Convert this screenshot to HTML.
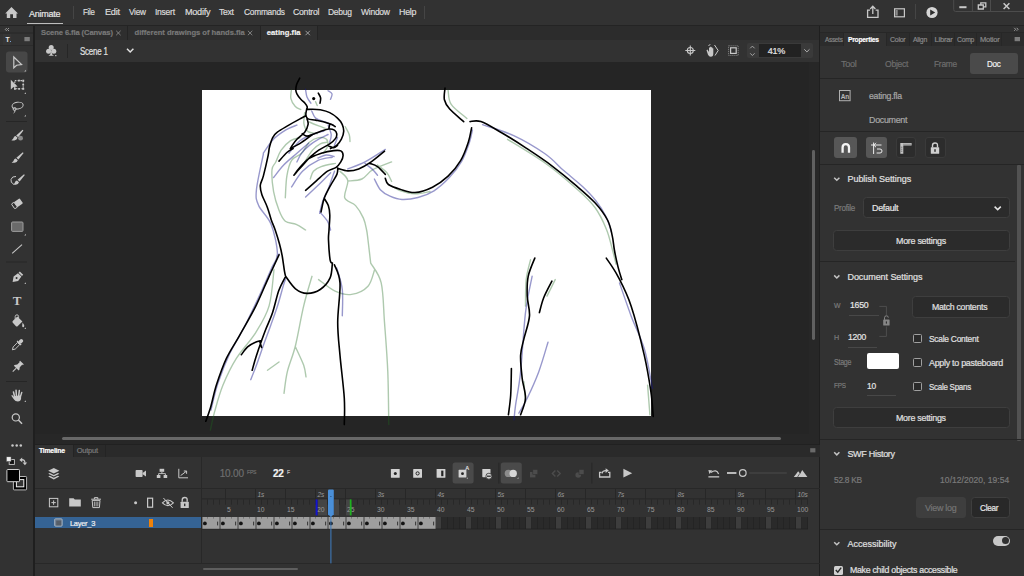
<!DOCTYPE html>
<html>
<head>
<meta charset="utf-8">
<title>Animate</title>
<style>
*{box-sizing:border-box;margin:0;padding:0}
html,body{width:1024px;height:576px;overflow:hidden;background:#252525;font-family:"Liberation Sans",sans-serif;font-size:10px;color:#d8d8d8}
.a{position:absolute}
.t{position:absolute;white-space:nowrap;line-height:12px;height:12px;-webkit-text-stroke:0.2px currentColor}
svg{position:absolute;overflow:visible}
</style>
</head>
<body>
<div class="a" style="left:0px;top:0px;width:1024px;height:25px;background:#323232;"></div>
<div class="a" style="left:0px;top:25px;width:1024px;height:1px;background:#242424;"></div>
<div class="a" style="left:0px;top:26px;width:33px;height:550px;background:#323232;"></div>
<div class="a" style="left:33px;top:26px;width:2px;height:550px;background:#1f1f1f;"></div>
<div class="a" style="left:35px;top:26px;width:785px;height:14px;background:#2c2c2c;"></div>
<div class="a" style="left:35px;top:40px;width:785px;height:22px;background:#323232;"></div>
<div class="a" style="left:35px;top:62px;width:785px;height:382px;background:#252525;"></div>
<div class="a" style="left:201.7px;top:89.7px;width:449.4px;height:326.6px;background:#ffffff;"></div>
<div class="a" style="left:35px;top:443.6px;width:785px;height:2px;background:#212121;"></div>
<div class="a" style="left:35px;top:445px;width:785px;height:131px;background:#323232;"></div>
<div class="a" style="left:818.8px;top:26px;width:1.4px;height:550px;background:#1f1f1f;"></div>
<div class="a" style="left:820.2px;top:26px;width:203.8px;height:550px;background:#323232;"></div>
<div class="a" style="left:27px;top:23px;width:36px;height:1px;background:#bdbdbd;"></div>
<div class="a" style="left:73px;top:6px;width:1px;height:13px;background:#454545;"></div>
<div class="a" style="left:424px;top:6px;width:1px;height:13px;background:#454545;"></div>
<div class="a" style="left:35px;top:26px;width:92px;height:14px;background:#2e2e2e;"></div>
<div class="a" style="left:127px;top:26px;width:1px;height:14px;background:#242424;"></div>
<div class="a" style="left:128px;top:26px;width:132px;height:14px;background:#2e2e2e;"></div>
<div class="a" style="left:259.5px;top:26px;width:1px;height:14px;background:#242424;"></div>
<div class="a" style="left:260.5px;top:26px;width:56.5px;height:14px;background:#313131;"></div>
<div class="a" style="left:317px;top:26px;width:1px;height:14px;background:#242424;"></div>
<div class="a" style="left:67px;top:44px;width:1px;height:14px;background:#262626;"></div>
<div class="a" style="left:747px;top:43px;width:66px;height:15px;background:#3a3a3a;border-radius:2px"></div>
<div class="a" style="left:759px;top:44px;width:42px;height:13px;background:#222222;"></div>
<div class="a" style="left:809px;top:62px;width:10px;height:382px;background:#272727;"></div>
<div class="a" style="left:35px;top:433.5px;width:784px;height:10px;background:#272727;"></div>
<div class="a" style="left:62px;top:437px;width:719.3px;height:3px;background:#686868;border-radius:1.5px"></div>
<div class="a" style="left:812.2px;top:149.5px;width:2.8px;height:190px;background:#606060;border-radius:1.4px"></div>
<div class="a" style="left:820.2px;top:26px;width:203.8px;height:7px;background:#2f2f2f;"></div>
<div class="a" style="left:820.2px;top:32.4px;width:203.8px;height:1px;background:#272727;"></div>
<div class="a" style="left:820.2px;top:33.4px;width:203.8px;height:12.4px;background:#2c2c2c;"></div>
<div class="a" style="left:844px;top:33px;width:41.6px;height:13px;background:#323232;"></div>
<div class="a" style="left:843.4px;top:33px;width:1px;height:13px;background:#272727;"></div>
<div class="a" style="left:885.6px;top:33px;width:1px;height:13px;background:#272727;"></div>
<div class="a" style="left:909px;top:33px;width:1px;height:13px;background:#272727;"></div>
<div class="a" style="left:931px;top:33px;width:1px;height:13px;background:#272727;"></div>
<div class="a" style="left:953.6px;top:33px;width:1px;height:13px;background:#272727;"></div>
<div class="a" style="left:976px;top:33px;width:1px;height:13px;background:#272727;"></div>
<div class="a" style="left:1000.6px;top:33px;width:1px;height:13px;background:#272727;"></div>
<div class="a" style="left:970px;top:53px;width:48px;height:21px;background:#4a4a4a;border-radius:3px"></div>
<div class="a" style="left:820.2px;top:78px;width:203.8px;height:1.2px;background:#252525;"></div>
<div class="a" style="left:820.2px;top:131px;width:203.8px;height:1.2px;background:#252525;"></div>
<div class="a" style="left:834px;top:137px;width:23px;height:21px;background:#575757;border-radius:3px"></div>
<div class="a" style="left:866px;top:137px;width:21px;height:21px;background:#575757;border-radius:3px"></div>
<div class="a" style="left:896px;top:137px;width:20px;height:21px;background:#2c2c2c;border-radius:3px;border:1px solid #3a3a3a"></div>
<div class="a" style="left:925px;top:137px;width:21px;height:21px;background:#2c2c2c;border-radius:3px;border:1px solid #3a3a3a"></div>
<div class="a" style="left:820.2px;top:164px;width:203.8px;height:1.2px;background:#252525;"></div>
<div class="a" style="left:1017.2px;top:165px;width:3.6px;height:276px;background:#525252;border-radius:1px"></div>
<div class="a" style="left:863px;top:197.4px;width:146.6px;height:21px;background:#2b2b2b;border-radius:3.5px;border:1px solid #3e3e3e"></div>
<div class="a" style="left:833.4px;top:229.6px;width:176.2px;height:21px;background:#2b2b2b;border-radius:3.5px;border:1px solid #3e3e3e"></div>
<div class="a" style="left:820.2px;top:261px;width:194.8px;height:1.2px;background:#252525;"></div>
<div class="a" style="left:849px;top:315px;width:30px;height:1px;background:#484848;"></div>
<div class="a" style="left:848px;top:347px;width:29px;height:1px;background:#484848;"></div>
<div class="a" style="left:912px;top:296.2px;width:97.6px;height:21.5px;background:#2b2b2b;border-radius:3.5px;border:1px solid #3e3e3e"></div>
<div class="a" style="left:913px;top:334px;width:9px;height:9px;background:#2a2a2a;border:1px solid #a0a0a0;border-radius:1.5px"></div>
<div class="a" style="left:913px;top:358px;width:9px;height:9px;background:#2a2a2a;border:1px solid #a0a0a0;border-radius:1.5px"></div>
<div class="a" style="left:913px;top:382px;width:9px;height:9px;background:#2a2a2a;border:1px solid #a0a0a0;border-radius:1.5px"></div>
<div class="a" style="left:867px;top:353px;width:32px;height:16px;background:#ffffff;border-radius:2px"></div>
<div class="a" style="left:867px;top:395px;width:29px;height:1px;background:#484848;"></div>
<div class="a" style="left:833.4px;top:407px;width:176.2px;height:21px;background:#2b2b2b;border-radius:3.5px;border:1px solid #3e3e3e"></div>
<div class="a" style="left:820.2px;top:438.7px;width:203.8px;height:1.3px;background:#252525;"></div>
<div class="a" style="left:915.8px;top:496.6px;width:50.4px;height:21.2px;background:#3e3e3e;border-radius:3.5px"></div>
<div class="a" style="left:971.3px;top:496.6px;width:38.3px;height:21.2px;background:#282828;border-radius:3.5px;border:1px solid #3e3e3e"></div>
<div class="a" style="left:820.2px;top:528.5px;width:203.8px;height:1.3px;background:#252525;"></div>
<div class="a" style="left:993px;top:536px;width:17px;height:9.5px;background:#c8c8c8;border-radius:5px"></div>
<div class="a" style="left:1001.5px;top:537.3px;width:7px;height:7px;background:#303030;border-radius:4px"></div>
<div class="a" style="left:834px;top:565.5px;width:9px;height:9px;background:#d0d0d0;border-radius:1.5px"></div>
<div class="a" style="left:35px;top:445px;width:785px;height:12px;background:#2a2a2a;"></div>
<div class="a" style="left:35px;top:445px;width:38px;height:12px;background:#323232;"></div>
<div class="a" style="left:73px;top:445px;width:1px;height:12px;background:#242424;"></div>
<div class="a" style="left:105px;top:445px;width:1px;height:12px;background:#242424;"></div>
<div class="a" style="left:35px;top:488px;width:785px;height:1px;background:#282828;"></div>
<div class="a" style="left:201px;top:457px;width:1px;height:107px;background:#282828;"></div>
<div class="a" style="left:35px;top:563px;width:785px;height:1px;background:#282828;"></div>
<div class="a" style="left:203px;top:567.8px;width:95px;height:2.6px;background:#5e5e5e;border-radius:1.3px"></div>
<div class="a" style="left:35px;top:516.8px;width:166.4px;height:11.6px;background:#356394;"></div>
<div class="a" style="left:149px;top:519px;width:3.5px;height:8px;background:#f0820a;"></div>
<svg width="1024" height="576" viewBox="0 0 1024 576" style="left:0;top:0"><g fill="none" stroke-linecap="round" stroke-linejoin="round"><path d="M392.0,186.0C393.3,186.8 396.2,189.2 400.0,190.5C403.8,191.8 410.0,193.6 415.0,193.8C420.0,194.0 427.5,191.9 430.0,191.5M304.7,162.0C306.0,160.0 309.9,153.1 312.5,150.1C315.1,147.1 317.9,145.2 320.3,143.9C322.7,142.6 325.6,142.6 326.6,142.3M326.6,139.2C326.9,140.2 328.6,143.1 328.1,145.4C327.6,147.7 324.2,151.9 323.4,153.2M291.4,90.0C291.3,91.4 290.2,95.9 290.9,98.6C291.5,101.3 293.6,104.6 295.3,106.4C297.0,108.2 299.9,109.0 300.8,109.5M304.7,112.6C304.6,114.4 303.4,120.5 303.9,123.6C304.4,126.7 305.6,129.7 307.8,131.4C310.0,133.1 315.6,133.3 317.2,133.7M315.6,101.7L317.2,105.6M345.3,126.7C345.9,128.0 348.4,132.0 349.2,134.5C350.0,137.0 349.9,140.3 350.0,141.5M309.4,122.0C310.9,122.7 316.1,124.9 318.7,125.9C321.3,126.9 323.9,127.8 325.0,128.2M300.0,137.6C298.4,138.1 293.7,138.6 290.6,140.7C287.5,142.8 283.7,146.5 281.2,150.1C278.7,153.7 277.3,158.7 275.8,162.0C274.3,165.3 272.4,164.8 272.0,169.7C271.6,174.6 272.4,184.8 273.6,191.6C274.8,198.4 277.1,205.4 279.0,210.3C280.9,215.2 282.4,218.8 285.3,221.2C288.2,223.5 292.8,222.9 296.2,224.4C299.6,225.9 304.0,229.1 305.6,230.0M328.1,145.4C327.9,144.4 328.2,140.5 326.6,139.2C325.0,137.9 321.6,137.1 318.7,137.6C315.8,138.1 312.2,139.7 309.4,142.3C306.5,144.9 304.6,150.2 301.6,153.2C298.6,156.2 294.1,156.5 291.6,160.3C289.2,164.1 287.9,169.7 286.9,175.9C285.8,182.2 285.6,194.2 285.3,197.8M335.3,163.4C332.9,163.9 324.9,165.3 321.2,166.6C317.5,167.9 315.2,169.1 313.4,171.2C311.6,173.3 310.8,177.7 310.3,179.0M340.0,171.2C341.3,172.8 347.0,176.2 347.8,180.6C348.6,185.0 343.4,193.6 344.7,197.8C346.0,202.0 352.5,202.2 355.6,205.6C358.7,209.0 361.6,214.0 363.4,218.1C365.2,222.2 365.8,226.3 366.6,230.0C367.4,233.7 367.3,234.5 368.0,240.0C368.7,245.5 370.2,259.2 370.7,263.1M347.8,181.0C350.1,180.7 357.7,180.9 361.9,179.0C366.1,177.1 367.9,172.5 372.8,169.7C377.8,166.8 388.5,163.2 391.6,161.9M377.5,165.0C379.1,166.3 384.5,170.1 386.9,172.8C389.2,175.5 390.8,180.0 391.6,181.4M448.1,90.3C448.6,92.7 448.1,99.7 451.2,104.4C454.3,109.1 464.3,116.1 466.9,118.4M507.5,139.3C513.8,143.2 533.2,154.6 545.0,163.0C556.8,171.4 569.7,182.6 578.0,190.0C586.3,197.4 590.2,200.9 595.0,207.5C599.8,214.1 603.6,222.3 606.5,229.4C609.4,236.5 610.9,244.2 612.5,250.0C614.1,255.8 615.4,261.7 616.0,264.0M370.7,263.1C372.4,266.4 378.9,273.0 381.2,282.9C383.5,292.8 383.4,307.6 384.5,322.4C385.6,337.2 387.1,354.9 387.8,371.9C388.5,388.9 388.6,415.8 388.8,424.6M318.6,279.6C321.4,281.5 329.6,288.6 335.1,291.1C340.6,293.6 346.1,295.2 351.6,294.4C357.1,293.6 364.2,290.3 368.0,286.2C371.8,282.1 373.5,272.4 374.6,269.7M312.0,276.3C310.6,281.2 306.4,294.4 303.7,305.9C300.9,317.4 298.2,334.5 295.5,345.5C292.8,356.5 289.2,363.9 287.3,371.9C285.4,379.9 284.6,389.7 284.0,393.3M295.5,347.1C296.9,350.1 301.9,360.4 303.7,365.3C305.4,370.2 305.6,374.9 306.0,376.8M267.5,370.2L279.0,362.0M274.0,269.7C273.2,275.7 272.1,295.5 269.1,305.9C266.1,316.3 261.4,323.5 255.9,332.3C250.4,341.1 241.7,349.9 236.2,358.7C230.7,367.5 226.6,376.3 223.0,385.1C219.4,393.9 216.8,403.9 214.7,411.4C212.6,418.9 211.1,426.9 210.4,430.0M530.5,259.8C529.8,263.1 527.0,271.9 526.2,279.6C525.4,287.3 525.6,301.6 525.5,306.0M555.2,279.6L547.0,296.1M523.9,381.8L525.5,401.6M647.6,385.1L649.9,414.8" stroke="rgba(30,105,30,0.36)" stroke-width="1.4"/><path d="M328.1,134.5C326.5,135.3 321.8,137.4 318.7,139.2C315.6,141.0 312.2,143.1 309.4,145.4C306.5,147.7 303.7,150.4 301.6,153.2C299.5,156.0 297.7,160.5 296.9,162.0M337.5,137.6L334.4,145.4M318.0,158.0C319.3,157.5 323.3,155.2 326.0,155.0C328.7,154.8 332.7,156.2 334.0,156.5M279.0,254.0C277.2,258.0 271.8,269.8 268.0,278.0C264.2,286.2 258.0,298.8 256.0,303.0M305.5,89.2C305.8,90.5 306.1,94.7 307.0,97.0C307.9,99.3 310.2,102.2 310.9,103.2M328.1,90.7C328.8,91.2 331.6,92.5 332.0,93.9C332.4,95.3 330.8,98.4 330.5,99.3M311.7,111.0C312.4,112.2 313.4,116.3 315.6,118.1C317.8,119.9 322.1,120.8 325.0,122.0C327.9,123.2 331.7,124.5 333.0,125.0M263.3,153.2C265.0,150.9 269.6,143.1 273.4,139.2C277.2,135.3 282.0,132.2 285.9,129.8C289.8,127.5 295.1,125.9 296.9,125.1M289.0,153.2C290.8,151.1 296.1,143.8 300.0,140.7C303.9,137.6 308.5,136.1 312.5,134.5C316.5,132.9 322.1,131.6 324.0,131.0M328.1,125.1C328.6,126.7 330.9,131.6 331.2,134.5C331.5,137.4 329.9,141.0 329.7,142.3M263.4,154.0C262.2,160.0 257.2,181.4 256.4,190.0C255.6,198.6 256.2,199.9 258.7,205.6C261.2,211.3 268.1,216.5 271.2,224.4C274.3,232.3 277.2,246.2 277.4,253.2C277.6,260.2 273.2,264.2 272.4,266.4M273.6,177.5C275.3,175.4 279.7,169.2 283.7,165.0C287.7,160.8 293.6,156.2 297.8,152.5C302.0,148.8 306.9,144.7 308.7,143.1M291.6,186.9C293.4,184.3 298.1,175.6 302.5,171.2C306.9,166.8 313.2,162.6 318.1,160.3C323.1,158.0 329.9,157.7 332.2,157.2M305.6,197.0C307.7,195.1 313.9,189.3 318.1,185.3C322.3,181.3 328.5,174.9 330.6,172.8M319.7,213.4C320.2,211.3 321.2,205.4 322.8,201.0C324.4,196.6 327.1,191.9 329.0,186.9C330.9,181.9 333.6,173.8 334.5,171.2M319.7,211.9C321.0,213.4 325.7,218.2 327.5,221.2C329.3,224.2 330.1,228.5 330.6,230.0M347.8,168.9C350.7,167.7 358.8,165.2 365.0,161.9C371.2,158.7 381.9,151.5 385.3,149.4M374.4,179.0C375.4,180.8 378.0,187.1 380.6,190.0C383.2,192.9 386.4,194.6 390.0,196.2C393.6,197.8 397.3,199.3 402.0,199.5C406.7,199.7 412.7,198.9 418.0,197.5C423.3,196.1 428.8,194.1 434.0,190.8C439.2,187.5 444.7,182.5 449.3,177.6C453.9,172.7 458.2,167.3 461.6,161.4C465.0,155.5 467.6,147.6 469.4,142.4C471.2,137.2 471.9,132.1 472.4,130.0M365.0,163.4C366.3,164.4 370.7,167.7 372.8,169.7C374.9,171.7 376.7,174.3 377.5,175.2M482.5,124.7C487.7,126.5 503.3,130.8 513.7,135.6C524.1,140.4 536.7,148.0 545.0,153.8C553.3,159.6 557.5,165.1 563.7,170.6C570.0,176.1 577.1,181.5 582.5,186.6C587.9,191.7 592.1,196.0 596.0,201.0C599.9,206.0 603.4,211.3 606.0,216.5C608.6,221.7 610.6,229.4 611.5,232.0M272.4,266.4C270.7,270.3 266.4,280.4 262.0,290.0C257.6,299.6 251.3,313.2 246.0,323.7C240.7,334.2 234.7,343.1 230.0,353.0C225.3,362.9 221.2,373.6 218.0,383.1C214.8,392.6 212.2,405.5 211.0,410.0M286.0,278.0C285.6,279.2 284.9,280.3 283.5,285.0C282.1,289.7 279.7,299.2 277.5,306.0C275.3,312.8 272.8,319.5 270.5,326.0C268.2,332.5 265.8,338.5 263.5,345.0C261.2,351.5 258.6,359.2 256.5,365.0C254.4,370.8 251.7,377.2 250.7,379.7M336.7,268.0C337.6,271.6 341.4,281.5 342.3,289.5C343.2,297.5 342.3,311.4 342.3,315.8M532.1,276.3C531.0,282.4 527.4,296.7 525.5,312.6C523.6,328.5 522.2,356.5 520.6,371.9C519.0,387.3 516.7,396.9 515.6,404.9C514.5,412.9 514.3,417.2 514.0,419.7M548.0,342.2C546.5,347.1 542.2,362.5 538.7,371.9C535.2,381.2 530.5,391.4 527.2,398.3C523.9,405.2 520.3,410.7 518.9,413.2M619.5,282.9C621.4,288.4 627.0,304.9 631.1,315.9C635.2,326.9 640.7,336.7 644.3,348.8C647.9,360.9 651.1,381.8 652.5,388.4" stroke="rgba(20,20,140,0.44)" stroke-width="1.4"/><path d="M299.7,78.2C299.2,79.2 297.2,82.5 296.6,84.5C296.0,86.5 295.8,88.4 295.8,90.0C295.9,91.6 296.1,92.4 296.9,93.9C297.7,95.5 299.4,97.8 300.8,99.3C302.2,100.8 303.9,102.0 305.0,103.2C306.1,104.4 306.9,105.7 307.2,106.7C307.5,107.7 306.7,108.8 306.6,109.2M318.3,93.1C318.7,93.9 320.3,96.1 320.6,97.8C320.9,99.5 320.1,102.3 320.0,103.2M306.6,109.5C307.6,109.5 310.2,109.2 312.5,109.2C314.8,109.2 317.4,109.2 320.3,109.8C323.2,110.4 326.8,111.2 329.7,112.6C332.6,114.0 335.4,116.1 337.5,118.1C339.6,120.0 341.2,122.1 342.2,124.3C343.2,126.5 343.8,128.9 343.7,131.4C343.6,133.9 342.6,136.9 341.4,139.2C340.2,141.5 338.5,143.8 336.7,145.4C334.9,147.0 331.5,148.1 330.5,148.6M306.6,109.5C306.5,110.4 305.6,113.4 305.9,115.0C306.1,116.6 306.5,118.1 308.1,118.9C309.7,119.8 313.1,119.6 315.6,120.1C318.2,120.6 320.8,121.0 323.4,121.7C326.0,122.4 329.2,123.5 331.2,124.3C333.2,125.1 334.5,126.3 335.2,126.7M305.9,115.7C304.9,116.2 303.1,117.2 300.0,118.9C296.9,120.6 291.3,123.7 287.5,125.9C283.7,128.1 279.8,130.2 277.3,132.2C274.8,134.1 274.0,135.1 272.7,137.6C271.4,140.1 270.3,144.0 269.5,147.0C268.7,150.0 269.1,150.8 268.1,155.6C267.1,160.4 264.7,170.9 263.4,175.9C262.1,180.9 260.6,182.2 260.3,185.3C260.1,188.4 260.7,191.0 261.9,194.7C263.1,198.3 265.8,203.0 267.3,207.2C268.9,211.4 269.9,215.9 271.2,219.7C272.5,223.5 273.8,225.9 275.2,230.0C276.6,234.1 278.3,239.6 279.5,244.0C280.7,248.4 281.5,251.9 282.3,256.5C283.1,261.1 283.9,268.0 284.5,271.3C285.1,274.6 285.4,275.5 285.6,276.3M307.0,118.9C307.2,119.8 308.5,122.1 308.1,124.3C307.7,126.5 306.6,129.7 304.7,132.2C302.8,134.7 299.0,137.0 296.9,139.2C294.8,141.4 293.3,143.8 292.2,145.4C291.1,147.0 290.6,148.3 290.3,148.9M290.3,148.6C292.2,147.6 297.9,144.7 301.6,142.3C305.3,140.0 310.7,135.8 312.5,134.5M293.1,148.6C292.1,149.2 289.2,150.4 286.9,152.5C284.5,154.6 280.3,159.7 279.0,161.1M302.3,133.7C303.1,134.1 305.3,136.0 307.0,136.1C308.7,136.2 310.3,135.3 312.5,134.5C314.7,133.7 317.6,132.3 320.3,131.4C323.0,130.5 326.5,129.2 328.9,129.0C331.2,128.8 333.1,129.3 334.4,130.1C335.7,130.9 336.5,132.3 336.7,133.7C336.9,135.1 336.8,136.7 335.6,138.4C334.4,140.1 332.5,142.0 329.7,143.9C326.9,145.8 321.8,148.0 318.7,150.1C315.6,152.2 313.1,154.4 310.9,156.4C308.7,158.4 307.7,159.8 305.6,162.0C303.6,164.2 300.6,167.5 298.6,169.7C296.7,171.9 294.7,174.3 293.9,175.2M329.7,124.3L328.9,128.6M293.9,175.2C294.8,174.0 296.9,170.8 299.4,168.1C301.9,165.3 305.1,161.2 308.7,158.7C312.3,156.2 317.0,154.7 321.2,153.3C325.4,152.0 330.4,151.0 333.7,150.6C337.0,150.2 339.2,150.1 340.8,150.9C342.4,151.7 343.1,153.8 343.1,155.6C343.1,157.4 342.0,159.9 340.8,161.9C339.6,163.9 338.3,165.8 336.1,167.3C333.9,168.9 330.8,169.0 327.5,171.2C324.2,173.4 320.2,177.4 316.6,180.6C313.0,183.8 307.4,188.7 305.6,190.3M329.0,146.2C329.8,146.5 332.3,147.9 333.7,147.8C335.1,147.7 336.9,145.8 337.5,145.4M337.7,168.1C337.6,169.2 338.1,171.5 336.9,174.4C335.7,177.3 332.7,181.4 330.6,185.3C328.5,189.2 325.8,194.2 324.4,197.8C323.0,201.5 322.6,204.8 322.0,207.2C321.4,209.6 321.2,211.2 321.0,212.0M324.4,198.6C325.0,199.8 327.4,202.9 328.3,205.6C329.2,208.3 329.7,210.9 329.8,215.0C329.9,219.1 329.2,225.8 329.0,230.0C328.8,234.2 328.3,235.0 328.5,240.0C328.7,245.0 329.5,256.0 330.1,259.8C330.8,263.7 332.0,262.6 332.4,263.1M337.7,168.4C339.4,168.8 344.3,170.8 347.8,170.9C351.3,171.0 354.8,170.4 358.7,168.9C362.6,167.4 366.9,164.9 371.2,161.9C375.5,158.9 382.3,153.0 384.5,151.2M369.7,163.4C371.0,163.9 374.9,164.8 377.5,166.6C380.1,168.4 384.0,173.1 385.3,174.4M385.3,178.3C385.8,179.3 385.9,182.7 388.4,184.5C390.8,186.3 395.6,187.9 400.0,189.2C404.4,190.5 409.6,192.8 415.0,192.5C420.4,192.2 427.0,189.9 432.5,187.2C438.0,184.5 443.4,180.6 448.1,176.2C452.8,171.8 457.2,166.3 460.6,160.6C464.0,154.9 466.6,147.4 468.4,141.9C470.2,136.4 471.1,130.2 471.6,127.8M445.0,88.1C444.9,90.0 443.6,96.2 444.4,99.7C445.2,103.2 446.5,105.4 449.7,109.1C452.9,112.8 461.4,119.5 463.7,121.6M470.0,121.6C471.8,121.6 475.7,119.8 480.9,121.6C486.1,123.4 493.6,128.1 501.2,132.5C508.8,136.9 517.9,142.6 526.2,148.1C534.5,153.6 542.9,159.1 551.2,165.3C559.5,171.6 568.9,179.3 576.2,185.6C583.5,191.8 589.8,197.1 595.0,202.8C600.2,208.5 604.6,214.5 607.5,220.0C610.4,225.5 611.1,230.6 612.2,235.6C613.4,240.6 613.5,244.9 614.4,250.0C615.3,255.1 616.7,261.5 617.9,266.4C619.1,271.3 621.1,277.4 621.8,279.6M606.3,258.1C608.2,261.1 613.8,268.3 617.9,276.3C622.0,284.3 626.7,292.8 631.1,306.0C635.5,319.2 641.0,341.1 644.3,355.4C647.6,369.7 649.4,381.5 650.9,391.7C652.4,401.9 652.8,412.3 653.2,416.4M285.6,276.3C287.2,278.4 291.9,286.0 295.5,288.8C299.1,291.6 302.9,293.3 307.0,293.4C311.1,293.5 316.3,292.1 320.2,289.5C324.1,286.9 328.1,282.3 330.1,277.9C332.1,273.5 332.0,265.6 332.4,263.1M279.0,254.8C277.4,258.4 273.0,267.8 269.1,276.3C265.2,284.8 260.8,296.0 255.9,305.9C251.0,315.8 244.4,326.8 239.5,335.6C234.6,344.4 230.2,350.4 226.3,358.7C222.5,366.9 219.1,376.9 216.4,385.1C213.8,393.3 212.2,402.1 210.4,408.1C208.6,414.1 206.6,419.1 205.8,421.3M285.0,277.5C284.0,279.7 280.9,284.8 278.8,290.6C276.7,296.4 274.8,305.9 272.6,312.5C270.4,319.1 267.3,325.3 265.5,330.0C263.7,334.7 263.2,336.1 261.6,340.6C260.0,345.1 257.6,352.1 256.0,357.0C254.4,361.9 252.8,368.1 252.2,370.3M241.3,354.7C242.4,353.4 245.2,349.0 247.6,346.9C249.9,344.8 253.1,343.2 255.4,342.2C257.7,341.1 260.6,340.9 261.6,340.6M260.0,342.2L261.6,347.5M334.4,264.7C335.3,267.7 339.4,273.3 340.0,282.9C340.6,292.5 337.7,310.3 337.7,322.4C337.7,334.5 338.9,342.8 340.0,355.4C341.1,368.0 343.6,386.7 344.3,398.2C345.0,409.7 344.3,420.2 344.3,424.6M534.8,258.1C533.7,261.1 529.5,270.0 528.2,276.3C526.9,282.6 527.0,289.5 527.2,296.1C527.4,302.7 530.0,308.8 529.5,315.9C529.0,323.0 525.4,332.3 523.9,338.9C522.4,345.5 520.9,348.8 520.6,355.4C520.3,362.0 521.4,371.4 522.2,378.5C523.0,385.6 525.8,392.2 525.5,398.3C525.2,404.4 521.4,412.1 520.6,414.8M551.9,281.2C550.5,283.9 545.8,292.5 543.7,297.7C541.6,302.9 540.1,310.1 539.4,312.6M511.4,368.6C511.3,373.0 511.2,387.3 510.7,395.0C510.2,402.7 508.8,411.5 508.4,414.8" stroke="#000" stroke-width="1.6"/><circle cx="313.7" cy="98.6" r="1.6" fill="#000" stroke="none"/></g></svg>
<svg width="1024" height="576" viewBox="0 0 1024 576" style="left:0;top:0"><rect x="202" y="489" width="606" height="28" fill="#323232"/><rect x="202" y="498.4" width="606" height="0.9" fill="#262626"/><path d="M225.5,489V499M255.5,489V499M285.5,489V499M315.5,489V499M345.5,489V499M375.5,489V499M405.5,489V499M435.5,489V499M465.5,489V499M495.5,489V499M525.5,489V499M555.5,489V499M585.5,489V499M615.5,489V499M645.5,489V499M675.5,489V499M705.5,489V499M735.5,489V499M765.5,489V499M795.5,489V499" stroke="#272727" stroke-width="1"/><path d="M207.5,499.4V504.6M213.5,499.4V504.6M219.5,499.4V504.6M225.5,499.4V504.6M231.5,499.4V504.6M237.5,499.4V504.6M243.5,499.4V504.6M249.5,499.4V504.6M255.5,499.4V504.6M261.5,499.4V504.6M267.5,499.4V504.6M273.5,499.4V504.6M279.5,499.4V504.6M285.5,499.4V504.6M291.5,499.4V504.6M297.5,499.4V504.6M303.5,499.4V504.6M309.5,499.4V504.6M315.5,499.4V504.6M321.5,499.4V504.6M327.5,499.4V504.6M333.5,499.4V504.6M339.5,499.4V504.6M345.5,499.4V504.6M351.5,499.4V504.6M357.5,499.4V504.6M363.5,499.4V504.6M369.5,499.4V504.6M375.5,499.4V504.6M381.5,499.4V504.6M387.5,499.4V504.6M393.5,499.4V504.6M399.5,499.4V504.6M405.5,499.4V504.6M411.5,499.4V504.6M417.5,499.4V504.6M423.5,499.4V504.6M429.5,499.4V504.6M435.5,499.4V504.6M441.5,499.4V504.6M447.5,499.4V504.6M453.5,499.4V504.6M459.5,499.4V504.6M465.5,499.4V504.6M471.5,499.4V504.6M477.5,499.4V504.6M483.5,499.4V504.6M489.5,499.4V504.6M495.5,499.4V504.6M501.5,499.4V504.6M507.5,499.4V504.6M513.5,499.4V504.6M519.5,499.4V504.6M525.5,499.4V504.6M531.5,499.4V504.6M537.5,499.4V504.6M543.5,499.4V504.6M549.5,499.4V504.6M555.5,499.4V504.6M561.5,499.4V504.6M567.5,499.4V504.6M573.5,499.4V504.6M579.5,499.4V504.6M585.5,499.4V504.6M591.5,499.4V504.6M597.5,499.4V504.6M603.5,499.4V504.6M609.5,499.4V504.6M615.5,499.4V504.6M621.5,499.4V504.6M627.5,499.4V504.6M633.5,499.4V504.6M639.5,499.4V504.6M645.5,499.4V504.6M651.5,499.4V504.6M657.5,499.4V504.6M663.5,499.4V504.6M669.5,499.4V504.6M675.5,499.4V504.6M681.5,499.4V504.6M687.5,499.4V504.6M693.5,499.4V504.6M699.5,499.4V504.6M705.5,499.4V504.6M711.5,499.4V504.6M717.5,499.4V504.6M723.5,499.4V504.6M729.5,499.4V504.6M735.5,499.4V504.6M741.5,499.4V504.6M747.5,499.4V504.6M753.5,499.4V504.6M759.5,499.4V504.6M765.5,499.4V504.6M771.5,499.4V504.6M777.5,499.4V504.6M783.5,499.4V504.6M789.5,499.4V504.6M795.5,499.4V504.6M801.5,499.4V504.6M807.5,499.4V504.6" stroke="#282828" stroke-width="1"/><rect x="318" y="499.4" width="9" height="16" fill="#454545"/><rect x="334" y="499.4" width="5" height="16" fill="#454545"/><rect x="346" y="499.4" width="4.5" height="16" fill="#454545"/><text x="226.9" y="512" font-family="Liberation Sans,sans-serif" font-size="6.8" fill="#9a9a9a">5</text><text x="256.9" y="512" font-family="Liberation Sans,sans-serif" font-size="6.8" fill="#9a9a9a">10</text><text x="286.9" y="512" font-family="Liberation Sans,sans-serif" font-size="6.8" fill="#9a9a9a">15</text><text x="316.9" y="512" font-family="Liberation Sans,sans-serif" font-size="6.8" fill="#9a9a9a">20</text><text x="346.9" y="512" font-family="Liberation Sans,sans-serif" font-size="6.8" fill="#9a9a9a">25</text><text x="376.9" y="512" font-family="Liberation Sans,sans-serif" font-size="6.8" fill="#9a9a9a">30</text><text x="406.9" y="512" font-family="Liberation Sans,sans-serif" font-size="6.8" fill="#9a9a9a">35</text><text x="436.9" y="512" font-family="Liberation Sans,sans-serif" font-size="6.8" fill="#9a9a9a">40</text><text x="466.9" y="512" font-family="Liberation Sans,sans-serif" font-size="6.8" fill="#9a9a9a">45</text><text x="496.9" y="512" font-family="Liberation Sans,sans-serif" font-size="6.8" fill="#9a9a9a">50</text><text x="526.9" y="512" font-family="Liberation Sans,sans-serif" font-size="6.8" fill="#9a9a9a">55</text><text x="556.9" y="512" font-family="Liberation Sans,sans-serif" font-size="6.8" fill="#9a9a9a">60</text><text x="586.9" y="512" font-family="Liberation Sans,sans-serif" font-size="6.8" fill="#9a9a9a">65</text><text x="616.9" y="512" font-family="Liberation Sans,sans-serif" font-size="6.8" fill="#9a9a9a">70</text><text x="646.9" y="512" font-family="Liberation Sans,sans-serif" font-size="6.8" fill="#9a9a9a">75</text><text x="676.9" y="512" font-family="Liberation Sans,sans-serif" font-size="6.8" fill="#9a9a9a">80</text><text x="706.9" y="512" font-family="Liberation Sans,sans-serif" font-size="6.8" fill="#9a9a9a">85</text><text x="736.9" y="512" font-family="Liberation Sans,sans-serif" font-size="6.8" fill="#9a9a9a">90</text><text x="766.9" y="512" font-family="Liberation Sans,sans-serif" font-size="6.8" fill="#9a9a9a">95</text><text x="796.9" y="512" font-family="Liberation Sans,sans-serif" font-size="6.8" fill="#9a9a9a">100</text><text x="257.4" y="497" font-family="Liberation Sans,sans-serif" font-size="6.5" font-style="italic" fill="#9a9a9a">1s</text><text x="317.4" y="497" font-family="Liberation Sans,sans-serif" font-size="6.5" font-style="italic" fill="#9a9a9a">2s</text><text x="377.4" y="497" font-family="Liberation Sans,sans-serif" font-size="6.5" font-style="italic" fill="#9a9a9a">3s</text><text x="437.4" y="497" font-family="Liberation Sans,sans-serif" font-size="6.5" font-style="italic" fill="#9a9a9a">4s</text><text x="497.4" y="497" font-family="Liberation Sans,sans-serif" font-size="6.5" font-style="italic" fill="#9a9a9a">5s</text><text x="557.4" y="497" font-family="Liberation Sans,sans-serif" font-size="6.5" font-style="italic" fill="#9a9a9a">6s</text><text x="617.4" y="497" font-family="Liberation Sans,sans-serif" font-size="6.5" font-style="italic" fill="#9a9a9a">7s</text><text x="677.4" y="497" font-family="Liberation Sans,sans-serif" font-size="6.5" font-style="italic" fill="#9a9a9a">8s</text><text x="737.4" y="497" font-family="Liberation Sans,sans-serif" font-size="6.5" font-style="italic" fill="#9a9a9a">9s</text><text x="797.4" y="497" font-family="Liberation Sans,sans-serif" font-size="6.5" font-style="italic" fill="#9a9a9a">10s</text><rect x="202" y="517" width="606" height="12" fill="#2a2a2a"/><rect x="436" y="517" width="6" height="12" fill="#3d3d3d"/><rect x="466" y="517" width="6" height="12" fill="#3d3d3d"/><rect x="496" y="517" width="6" height="12" fill="#3d3d3d"/><rect x="526" y="517" width="6" height="12" fill="#3d3d3d"/><rect x="556" y="517" width="6" height="12" fill="#3d3d3d"/><rect x="586" y="517" width="6" height="12" fill="#3d3d3d"/><rect x="616" y="517" width="6" height="12" fill="#3d3d3d"/><rect x="646" y="517" width="6" height="12" fill="#3d3d3d"/><rect x="676" y="517" width="6" height="12" fill="#3d3d3d"/><rect x="706" y="517" width="6" height="12" fill="#3d3d3d"/><rect x="736" y="517" width="6" height="12" fill="#3d3d3d"/><rect x="766" y="517" width="6" height="12" fill="#3d3d3d"/><rect x="796" y="517" width="6" height="12" fill="#3d3d3d"/><path d="M441.5,517V529M447.5,517V529M453.5,517V529M459.5,517V529M465.5,517V529M471.5,517V529M477.5,517V529M483.5,517V529M489.5,517V529M495.5,517V529M501.5,517V529M507.5,517V529M513.5,517V529M519.5,517V529M525.5,517V529M531.5,517V529M537.5,517V529M543.5,517V529M549.5,517V529M555.5,517V529M561.5,517V529M567.5,517V529M573.5,517V529M579.5,517V529M585.5,517V529M591.5,517V529M597.5,517V529M603.5,517V529M609.5,517V529M615.5,517V529M621.5,517V529M627.5,517V529M633.5,517V529M639.5,517V529M645.5,517V529M651.5,517V529M657.5,517V529M663.5,517V529M669.5,517V529M675.5,517V529M681.5,517V529M687.5,517V529M693.5,517V529M699.5,517V529M705.5,517V529M711.5,517V529M717.5,517V529M723.5,517V529M729.5,517V529M735.5,517V529M741.5,517V529M747.5,517V529M753.5,517V529M759.5,517V529M765.5,517V529M771.5,517V529M777.5,517V529M783.5,517V529M789.5,517V529M795.5,517V529M801.5,517V529M807.5,517V529" stroke="#232323" stroke-width="0.8"/><rect x="202" y="528.6" width="606" height="0.8" fill="#222"/><rect x="202.4" y="517" width="17.2" height="11.8" fill="#9e9e9e"/><circle cx="204.9" cy="523.4" r="1.9" fill="#141414"/><rect x="217.2" y="521.6" width="0.9" height="3.8" fill="#2a2a2a"/><rect x="220.4" y="517" width="17.2" height="11.8" fill="#9e9e9e"/><circle cx="222.9" cy="523.4" r="1.9" fill="#141414"/><rect x="235.2" y="521.6" width="0.9" height="3.8" fill="#2a2a2a"/><rect x="238.4" y="517" width="17.2" height="11.8" fill="#9e9e9e"/><circle cx="240.9" cy="523.4" r="1.9" fill="#141414"/><rect x="253.2" y="521.6" width="0.9" height="3.8" fill="#2a2a2a"/><rect x="256.4" y="517" width="17.2" height="11.8" fill="#9e9e9e"/><circle cx="258.9" cy="523.4" r="1.9" fill="#141414"/><rect x="271.2" y="521.6" width="0.9" height="3.8" fill="#2a2a2a"/><rect x="274.4" y="517" width="17.2" height="11.8" fill="#9e9e9e"/><circle cx="276.9" cy="523.4" r="1.9" fill="#141414"/><rect x="289.2" y="521.6" width="0.9" height="3.8" fill="#2a2a2a"/><rect x="292.4" y="517" width="17.2" height="11.8" fill="#9e9e9e"/><circle cx="294.9" cy="523.4" r="1.9" fill="#141414"/><rect x="307.2" y="521.6" width="0.9" height="3.8" fill="#2a2a2a"/><rect x="310.4" y="517" width="17.2" height="11.8" fill="#9e9e9e"/><circle cx="312.9" cy="523.4" r="1.9" fill="#141414"/><rect x="325.2" y="521.6" width="0.9" height="3.8" fill="#2a2a2a"/><rect x="328.4" y="517" width="17.2" height="11.8" fill="#9e9e9e"/><circle cx="330.9" cy="523.4" r="1.9" fill="#141414"/><rect x="343.2" y="521.6" width="0.9" height="3.8" fill="#2a2a2a"/><rect x="346.4" y="517" width="17.2" height="11.8" fill="#9e9e9e"/><circle cx="348.9" cy="523.4" r="1.9" fill="#141414"/><rect x="361.2" y="521.6" width="0.9" height="3.8" fill="#2a2a2a"/><rect x="364.4" y="517" width="17.2" height="11.8" fill="#9e9e9e"/><circle cx="366.9" cy="523.4" r="1.9" fill="#141414"/><rect x="379.2" y="521.6" width="0.9" height="3.8" fill="#2a2a2a"/><rect x="382.4" y="517" width="17.2" height="11.8" fill="#9e9e9e"/><circle cx="384.9" cy="523.4" r="1.9" fill="#141414"/><rect x="397.2" y="521.6" width="0.9" height="3.8" fill="#2a2a2a"/><rect x="400.4" y="517" width="17.2" height="11.8" fill="#9e9e9e"/><circle cx="402.9" cy="523.4" r="1.9" fill="#141414"/><rect x="415.2" y="521.6" width="0.9" height="3.8" fill="#2a2a2a"/><rect x="418.4" y="517" width="17.2" height="11.8" fill="#9e9e9e"/><circle cx="420.9" cy="523.4" r="1.9" fill="#141414"/><rect x="433.2" y="521.6" width="0.9" height="3.8" fill="#2a2a2a"/><path d="M207.5,517V518.6M213.5,517V518.6M225.5,517V518.6M231.5,517V518.6M243.5,517V518.6M249.5,517V518.6M261.5,517V518.6M267.5,517V518.6M279.5,517V518.6M285.5,517V518.6M297.5,517V518.6M303.5,517V518.6M315.5,517V518.6M321.5,517V518.6M333.5,517V518.6M339.5,517V518.6M351.5,517V518.6M357.5,517V518.6M369.5,517V518.6M375.5,517V518.6M387.5,517V518.6M393.5,517V518.6M405.5,517V518.6M411.5,517V518.6M423.5,517V518.6M429.5,517V518.6" stroke="#747474" stroke-width="1"/><rect x="315.6" y="499.4" width="2" height="16" fill="#1414d0"/><rect x="349.8" y="499.4" width="1.8" height="16" fill="#20b020"/><rect x="328" y="489.6" width="5.8" height="25.6" rx="1" fill="#4a8fd8"/><path d="M328,514L330.9,517L333.8,514Z" fill="#4a8fd8"/><rect x="330.4" y="516" width="1" height="47.4" fill="#3f7fc4"/><rect x="330.5" y="496" width="0.8" height="1" fill="#1d3a5c"/></svg>
<svg width="1024" height="576" viewBox="0 0 1024 576" style="left:0;top:0"><polygon points="11.5,7 18,13.6 16.5,13.6 16.5,18 13,18 13,14.3 10.2,14.3 10.2,18 6.8,18 6.8,13.6 5.2,13.6" fill="#c8c8c8"/><path d="M870,10.2H867.6V17.4H878V10.2H875.6M872.8,14V6.6M870.2,9L872.8,6.3L875.4,9" fill="none" stroke="#c8c8c8" stroke-width="1.3"/><rect x="894.6" y="8.8" width="9.8" height="8" fill="none" stroke="#c8c8c8" stroke-width="1.2"/><rect x="895.5" y="10" width="2.2" height="5.6" fill="#8a8a8a"/><rect x="915" y="4" width="1" height="15" fill="#454545"/><circle cx="932" cy="12.5" r="5.6" fill="#d6d6d6"/><polygon points="930.2,9.6 935.2,12.5 930.2,15.4" fill="#2c2c2c"/><path d="M953.7,0V9.5Q953.7,11.5 955.7,11.5H1024M972.4,0V11.5M990.5,0V11.5" fill="none" stroke="#4c4c4c" stroke-width="1"/><rect x="959.3" y="6.2" width="7.2" height="2" fill="#c8c8c8"/><path d="M978.3,5H983.3V9H978.3ZM980.8,5V2.8H985.8V6.8H983.3" fill="none" stroke="#c8c8c8" stroke-width="1.3"/><path d="M1003.6,3.2L1009.4,9M1009.4,3.2L1003.6,9" fill="none" stroke="#c8c8c8" stroke-width="1.5"/><path d="M116.2,30.8L120.60000000000001,35.2M120.60000000000001,30.8L116.2,35.2" stroke="#8a8a8a" stroke-width="0.9" fill="none"/><path d="M247.9,30.8L252.29999999999998,35.2M252.29999999999998,30.8L247.9,35.2" stroke="#8a8a8a" stroke-width="0.9" fill="none"/><path d="M305.5,30.8L309.9,35.2M309.9,30.8L305.5,35.2" stroke="#a8a8a8" stroke-width="0.9" fill="none"/><g fill="#c8c8c8"><circle cx="51.2" cy="47.6" r="2.5"/><circle cx="48.6" cy="51.3" r="2.5"/><circle cx="53.8" cy="51.3" r="2.5"/><polygon points="51.2,50 52.2,54.5 54,55.8 48.4,55.8 50.2,54.5"/><rect x="55.2" y="55" width="1.2" height="1.2"/></g><path d="M127,48.8L130.2,52L133.4,48.8" fill="none" stroke="#e0e0e0" stroke-width="1.5"/><g fill="none" stroke="#c8c8c8" stroke-width="1.1"><circle cx="690.3" cy="50.5" r="3"/><path d="M685.3,50.5H695.3M690.3,45.5V55.5"/></g><g fill="#c8c8c8"><path d="M707.5,49.5L709,52V47.5h1.1V51V46.8h1.1V51V47.3h1.1V51.2V48.3h1V53.5Q713.3,56.8 710.8,56.8Q709,56.8 708,54.8L706.5,50.2Z"/></g><path d="M708.5,46L710.2,44.2M714.5,45L718.2,50.5L715,55.5" fill="none" stroke="#c8c8c8" stroke-width="1"/><rect x="728.6" y="45.8" width="9.6" height="9.6" fill="none" stroke="#8c8c8c" stroke-width="1" stroke-dasharray="1,1"/><rect x="730.6" y="47.8" width="5.6" height="5.6" fill="none" stroke="#c8c8c8" stroke-width="1.2"/><path d="M750.2,48.3L752.4,46.1L754.6,48.3M750.2,53.3L752.4,55.5L754.6,53.3" fill="none" stroke="#b0b0b0" stroke-width="0.9"/><path d="M804.3,49.3L806.9,51.9L809.5,49.3" fill="none" stroke="#b0b0b0" stroke-width="1"/><rect x="0" y="32.5" width="33" height="1" fill="#272727"/><path d="M6.8,28L5.3,29.5L6.8,31M9,28L7.5,29.5L9,31" fill="none" stroke="#b4b4b4" stroke-width="0.8"/><rect x="3" y="34" width="8" height="11" fill="#363636"/><rect x="0" y="45" width="33" height="1" fill="#2b2b2b"/><rect x="24.4" y="37" width="5.4" height="4.2" fill="#7c7c7c"/><text x="5.4" y="42.2" font-family="Liberation Sans,sans-serif" font-weight="bold" font-size="6.8" fill="#e8e8e8">T</text><rect x="10" y="41" width="1" height="1" fill="#7aa0d0"/><rect x="6" y="51.5" width="21.5" height="21" rx="3" fill="#474747"/><path d="M13.8,57V67.8L16.6,65.2L21.6,64.6Z" fill="none" stroke="#c8c8c8" stroke-width="1.2" stroke-linejoin="miter"/><polygon points="26,71.5 26,69.7 24.2,71.5" fill="#b0b0b0"/><polygon points="26,94 26,92.2 24.2,94" fill="#b0b0b0"/><polygon points="26,116.5 26,114.7 24.2,116.5" fill="#b0b0b0"/><polygon points="10.8,79.8 10.8,89.5 13.2,87.3 17.6,86.6" fill="#c8c8c8"/><rect x="14.8" y="80.6" width="8.4" height="8.2" fill="none" stroke="#c8c8c8" stroke-width="1.1" stroke-dasharray="1.6,1.2"/><g fill="#c8c8c8"><rect x="22.3" y="79.7" width="1.9" height="1.9"/><rect x="22.3" y="87.9" width="1.9" height="1.9"/><rect x="14" y="87.9" width="1.9" height="1.9"/><rect x="18.2" y="79.7" width="1.7" height="1.7"/><rect x="18.2" y="88" width="1.7" height="1.7"/><rect x="22.4" y="83.9" width="1.7" height="1.7"/></g><g fill="none" stroke="#c8c8c8" stroke-width="1"><ellipse cx="17.6" cy="105.6" rx="5.6" ry="3.4" transform="rotate(-8 17.6 105.6)"/><circle cx="14.6" cy="109" r="1.5"/><path d="M14.8,110.4Q15.4,112.2 13.6,113"/></g><rect x="6" y="121" width="21" height="1" fill="#262626"/><g transform="translate(17,135.6)" fill="#c8c8c8"><path d="M5.6,-5.8L6.4,-5L1.2,1.6L-0.8,-0.2Z"/><path d="M-1.4,0.4L0.6,2.2Q0,4.6 -2.6,4.8Q-4.4,5 -5.6,4.6Q-3.6,3.6 -3.4,2.2Q-3,0.6 -1.4,0.4Z"/></g><circle cx="20.6" cy="138.2" r="2.4" fill="#8a8a8a"/><g transform="translate(17.2,158)" fill="#c8c8c8"><path d="M5.6,-5.8L6.4,-5L1.2,1.6L-0.8,-0.2Z"/><path d="M-1.4,0.4L0.6,2.2Q0,4.6 -2.6,4.8Q-4.4,5 -5.6,4.6Q-3.6,3.6 -3.4,2.2Q-3,0.6 -1.4,0.4Z"/></g><g transform="translate(18.4,180)" fill="#c8c8c8"><path d="M5.6,-5.8L6.4,-5L1.2,1.6L-0.8,-0.2Z"/><path d="M-1.4,0.4L0.6,2.2Q0,4.6 -2.6,4.8Q-4.4,5 -5.6,4.6Q-3.6,3.6 -3.4,2.2Q-3,0.6 -1.4,0.4Z"/></g><path d="M16,176.5Q12,176 11,179.5Q10.4,183 13.6,184" fill="none" stroke="#c8c8c8" stroke-width="1"/><g transform="translate(17.2,203.6) rotate(-35)"><rect x="-5" y="-3" width="10" height="6" rx="0.8" fill="#c8c8c8"/><rect x="-5" y="-3" width="3.2" height="6" rx="0.8" fill="#323232" stroke="#c8c8c8" stroke-width="0.9"/></g><rect x="11.6" y="222" width="11.4" height="9.4" rx="1" fill="#6a6a6a" stroke="#9c9c9c" stroke-width="1"/><polygon points="26,235.5 26,233.7 24.2,235.5" fill="#b0b0b0"/><path d="M12.2,253.4L22,244.6" stroke="#c8c8c8" stroke-width="1.1"/><rect x="6" y="261.5" width="21" height="1" fill="#262626"/><g transform="translate(17,277.6) rotate(45)" fill="#c8c8c8"><path d="M-2.4,-6.4H2.4V-4.6H-2.4ZM-2.4,-3.8H2.4L3.2,1.6L0,6.2L-3.2,1.6Z"/><circle cx="0" cy="0.6" r="1" fill="#323232"/></g><polygon points="26,284 26,282.2 24.2,284" fill="#b0b0b0"/><text x="17" y="305.2" text-anchor="middle" font-family="Liberation Serif,serif" font-weight="bold" font-size="13" fill="#c8c8c8">T</text><g fill="#c8c8c8"><path d="M13.2,320.5L17.4,316.6L22.4,321.6L17.6,326.2Q16.8,327 16,326.2L12.6,322.6Q12,321.6 13.2,320.5Z"/><path d="M22.6,322.6Q24.4,325 24.2,326.2Q24,327.4 23,327.2Q22,327 22.2,325.4Z"/><path d="M15.2,319V316.4Q15.4,314.8 17,314.8Q18.4,314.8 18.6,316.4V318" fill="none" stroke="#c8c8c8" stroke-width="0.9"/></g><polygon points="26,329 26,327.2 24.2,329" fill="#b0b0b0"/><g transform="translate(17.2,345) rotate(45)" fill="#c8c8c8"><rect x="-1.8" y="-7.6" width="3.6" height="4.6" rx="1.6"/><rect x="-2.8" y="-3.4" width="5.6" height="1.4"/><path d="M-1.5,-2V4.2L0,6.8L1.5,4.2V-2Z" fill="none" stroke="#c8c8c8" stroke-width="0.9"/></g><g transform="translate(17.4,367) rotate(45)" fill="#c8c8c8"><path d="M-2.6,-6.4H2.6V-5.2H1.8V-1.6L3.4,0.6V1.6H-3.4V0.6L-1.8,-1.6V-5.2H-2.6Z"/><rect x="-0.5" y="1.6" width="1" height="5"/></g><rect x="6" y="381" width="21" height="1" fill="#262626"/><g transform="translate(17.2,396)" fill="#c8c8c8"><path d="M-3.3,0.2L3.9,-0.8V2.6Q3.6,5.6 0.6,5.6Q-2,5.6 -3.2,3.6L-5.7,0Q-6,-1 -5,-1.1L-3.3,0.8Z"/><rect x="-3.5" y="-4.8" width="1.5" height="6" rx="0.7" transform="rotate(-14 -2.7 0)"/><rect x="-1.5" y="-6.6" width="1.5" height="7.4" rx="0.7" transform="rotate(-4 -0.7 0)"/><rect x="0.7" y="-6.2" width="1.5" height="7" rx="0.7" transform="rotate(7 1.4 0)"/><rect x="2.7" y="-4.4" width="1.4" height="5.6" rx="0.7" transform="rotate(18 3.4 0)"/></g><polygon points="26,402 26,400.2 24.2,402" fill="#b0b0b0"/><circle cx="15.8" cy="417.4" r="3.6" fill="none" stroke="#c8c8c8" stroke-width="1.2"/><path d="M18.4,420L22,423.8" stroke="#c8c8c8" stroke-width="1.5"/><g fill="#c8c8c8"><circle cx="12.5" cy="445.4" r="1.25"/><circle cx="16.7" cy="445.4" r="1.25"/><circle cx="20.8" cy="445.4" r="1.25"/></g><rect x="9.2" y="459.6" width="5.2" height="4.8" fill="#111" stroke="#c8c8c8" stroke-width="0.9"/><rect x="6.3" y="456.8" width="4.8" height="4.8" fill="#f0f0f0" stroke="#323232" stroke-width="0.5"/><path d="M21.4,459.8Q24.8,459.4 24.9,462.8" fill="none" stroke="#c8c8c8" stroke-width="1.3"/><polygon points="19.4,459.9 22.2,457.6 22.2,462.2" fill="#c8c8c8"/><polygon points="24.9,465.2 22.6,462.4 27.2,462.4" fill="#c8c8c8"/><rect x="13.4" y="476.5" width="13.2" height="13.4" fill="#000" stroke="#c8c8c8" stroke-width="0.9" rx="0.8"/><rect x="16.4" y="479.6" width="7.4" height="7.2" fill="#333" stroke="#f0f0f0" stroke-width="1"/><rect x="6.9" y="469.5" width="12.6" height="12.2" fill="#000" stroke="#d0d0d0" stroke-width="1" rx="0.8"/></svg>
<svg width="1024" height="576" viewBox="0 0 1024 576" style="left:0;top:0"><path d="M1014.2,27.8L1015.7,29.3L1014.2,30.8M1016.6,27.8L1018.1,29.3L1016.6,30.8" fill="none" stroke="#b4b4b4" stroke-width="0.8"/><rect x="1014.6" y="37" width="5.4" height="4.2" fill="#7c7c7c"/><rect x="839.5" y="90.5" width="10.6" height="10.2" fill="none" stroke="#b0b0b0" stroke-width="1"/><text x="844.8" y="98.6" text-anchor="middle" font-family="Liberation Sans,sans-serif" font-weight="bold" font-size="6.5" fill="#b8b8b8" letter-spacing="-0.3">An</text><path d="M842.6,152.8V147.6Q842.6,144.2 845.8,144.2Q849,144.2 849,147.6V152.8" fill="none" stroke="#f4f4f4" stroke-width="2.3"/><path d="M873.6,142.5V154M871,145H881.5M873.8,145L876,142.8M873.8,145L876,147.2M877,149H880Q882,149 882,151Q882,153 880,153H876.6" fill="none" stroke="#ececec" stroke-width="1"/><path d="M900.3,143H911.6V145.6H903.3V153.8H900.3Z" fill="#c4c4c4"/><path d="M904,143.6V145M906,143.6V145M908,143.6V145M910,143.6V145M900.9,147.2H902.4M900.9,149.2H902.4M900.9,151.2H902.4" stroke="#555" stroke-width="0.7"/><g transform="translate(935,148.8) scale(1.0)"><path d="M-2.5,-1.4V-3.4Q-2.5,-5.8 0,-5.8Q2.5,-5.8 2.5,-3.4V-1.4" fill="none" stroke="#d0d0d0" stroke-width="1.4"/><rect x="-4.2" y="-1.6" width="8.4" height="6.6" rx="0.6" fill="#d0d0d0"/><rect x="-0.7" y="0.4" width="1.4" height="2.6" fill="#2c2c2c"/></g><path d="M834.2,177.7L836.8,180.3L839.4,177.7" fill="none" stroke="#c4c4c4" stroke-width="1.5"/><path d="M834.2,275.4L836.8,278.0L839.4,275.4" fill="none" stroke="#c4c4c4" stroke-width="1.5"/><path d="M834.2,452.3L836.8,454.90000000000003L839.4,452.3" fill="none" stroke="#c4c4c4" stroke-width="1.5"/><path d="M834.2,542.2L836.8,544.8L839.4,542.2" fill="none" stroke="#c4c4c4" stroke-width="1.5"/><path d="M994.6,206.6L997.7,209.6L1000.8,206.6" fill="none" stroke="#e4e4e4" stroke-width="1.5"/><path d="M879.4,306.4H886.4V315M886.4,326.5V336.4H879.4" fill="none" stroke="#4e4e4e" stroke-width="1"/><g transform="translate(886.4,322.4)"><path d="M-1.9,-2.6V-4.6Q-1.9,-6.6 0,-6.6Q1.9,-6.6 1.9,-4.8" fill="none" stroke="#868686" stroke-width="1"/><rect x="-3.2" y="-2.9" width="6.4" height="6" rx="0.6" fill="#868686"/><rect x="-0.6" y="-1" width="1.2" height="2.2" fill="#323232"/></g><path d="M835.8,570L837.8,572.2L841.2,567.6" fill="none" stroke="#2a2a2a" stroke-width="1.4"/><rect x="810.2" y="448.2" width="5.2" height="4.2" fill="#6a6a6a"/><g fill="#c8c8c8"><polygon points="53.8,468 59.4,470.8 53.8,473.6 48.2,470.8"/><path d="M49.8,473L48.2,473.8L53.8,476.6L59.4,473.8L57.8,473L53.8,475Z"/><path d="M49.8,475.8L48.2,476.6L53.8,479.4L59.4,476.6L57.8,475.8L53.8,477.8Z"/></g><g fill="#c8c8c8"><rect x="135.6" y="470" width="7" height="7" rx="0.8"/><polygon points="142.6,473 146,470.4 146,476.6 142.6,474.2"/></g><g fill="#c8c8c8"><rect x="159.6" y="468.8" width="4.6" height="3"/><rect x="156.8" y="475" width="3.6" height="3"/><rect x="163.6" y="475" width="3.6" height="3"/><path d="M161.9,471.8V473.6M158.6,475V473.6H165.4V475" fill="none" stroke="#c8c8c8" stroke-width="0.9"/></g><path d="M178.8,468.8V477.8H188M180.6,475.6L186.2,471.4M183.8,471H186.6V473.8" fill="none" stroke="#c8c8c8" stroke-width="1"/><rect x="49.4" y="498.4" width="8.4" height="8.4" fill="none" stroke="#c8c8c8" stroke-width="1"/><path d="M53.6,500.4V504.8M51.4,502.6H55.8" stroke="#c8c8c8" stroke-width="1"/><path d="M69.2,498.2H73.6L74.8,499.6H80.8V506.6H69.2Z" fill="#c8c8c8"/><path d="M91.2,499.2H101M94.4,499V497.6H97.8V499M92.2,500.4L92.8,507.6H99.4L100,500.4Z" fill="none" stroke="#c8c8c8" stroke-width="1"/><path d="M94.4,501.6V506.4M96.1,501.6V506.4M97.8,501.6V506.4" stroke="#c8c8c8" stroke-width="0.8"/><circle cx="135.6" cy="502.8" r="1.5" fill="#c8c8c8"/><rect x="147.6" y="498.2" width="5" height="9" fill="none" stroke="#c8c8c8" stroke-width="1.2"/><path d="M162.4,502.8Q167.8,497.2 173.4,502.8Q167.8,508.4 162.4,502.8Z" fill="none" stroke="#c8c8c8" stroke-width="1.1"/><circle cx="167.9" cy="502.8" r="1.6" fill="#c8c8c8"/><path d="M163.4,498L172.6,507.8" stroke="#c8c8c8" stroke-width="1"/><g transform="translate(184.7,503.2) scale(0.98)"><path d="M-2.5,-1.4V-3.4Q-2.5,-5.8 0,-5.8Q2.5,-5.8 2.5,-3.4V-1.4" fill="none" stroke="#c8c8c8" stroke-width="1.4"/><rect x="-4.2" y="-1.6" width="8.4" height="6.6" rx="0.6" fill="#c8c8c8"/><rect x="-0.7" y="0.4" width="1.4" height="2.6" fill="#323232"/></g><rect x="54.6" y="518.8" width="7.6" height="7.4" rx="1" fill="#6f7f92" stroke="#c0c8d0" stroke-width="0.7"/><rect x="56.2" y="520.6" width="5" height="4.8" fill="#565e68"/><rect x="390.9" y="469" width="8.8" height="8.8" rx="0.6" fill="#d2d2d2"/><circle cx="395.3" cy="473.4" r="1.5" fill="#222"/><rect x="413.2" y="469" width="8.8" height="8.8" rx="0.6" fill="#d2d2d2"/><circle cx="417.6" cy="473.4" r="1.6" fill="none" stroke="#222" stroke-width="1"/><rect x="436.6" y="469" width="8.8" height="8.8" rx="0.6" fill="#d2d2d2"/><rect x="441.2" y="470.6" width="2.2" height="5.6" fill="#222"/><rect x="452.6" y="462.6" width="21" height="20.8" rx="2.5" fill="#4a4a4a"/><rect x="458.6" y="469.8" width="7.8" height="7.8" rx="0.6" fill="#d2d2d2"/><circle cx="462.5" cy="473.7" r="1.4" fill="#222"/><text x="465.2" y="469.6" font-family="Liberation Sans,sans-serif" font-weight="bold" font-size="5.5" fill="#e0e0e0">A</text><polygon points="468,478.8 468,477.2 466.4,478.8" fill="#b0b0b0"/><rect x="482.3" y="469" width="8.2" height="8.2" rx="0.6" fill="#d2d2d2"/><circle cx="488.9" cy="476.2" r="3" fill="#d2d2d2" stroke="#323232" stroke-width="0.8"/><rect x="487" y="475.6" width="3.8" height="1.2" fill="#222"/><rect x="498.4" y="462.6" width="1" height="21" fill="#262626"/><rect x="500.8" y="462.6" width="21" height="20.8" rx="2.5" fill="#4a4a4a"/><circle cx="508.4" cy="473.4" r="3.7" fill="#8c8c8c"/><circle cx="513.2" cy="473.4" r="3.7" fill="#d6d6d6"/><polygon points="518.6,478.8 518.6,477.2 517,478.8" fill="#b0b0b0"/><rect x="530" y="472" width="5.4" height="5.4" fill="#4c4c4c"/><rect x="532.8" y="469.4" width="5" height="5" fill="#4c4c4c" stroke="#323232" stroke-width="0.6"/><path d="M555.4,470.6L552.4,473.6L555.4,476.6M557.2,470.6L560.2,473.6L557.2,476.6" fill="none" stroke="#4c4c4c" stroke-width="1.4"/><circle cx="578.2" cy="475" r="2.8" fill="#4c4c4c"/><rect x="579" y="469.4" width="5" height="5" fill="#4c4c4c" stroke="#323232" stroke-width="0.6"/><rect x="591.4" y="462.6" width="1" height="21" fill="#262626"/><path d="M601.6,472.4H599.6V477H609.8V472.4H608" fill="none" stroke="#c8c8c8" stroke-width="1.3"/><path d="M602.2,473.6Q602.2,470.6 606,470.6" fill="none" stroke="#c8c8c8" stroke-width="1.3"/><polygon points="605.6,468.2 608.8,470.6 605.6,473" fill="#c8c8c8"/><polygon points="623.4,468.8 632.2,473.2 623.4,477.6" fill="#c8c8c8"/><path d="M711,472.4Q716.4,468.6 718.6,474" fill="none" stroke="#c8c8c8" stroke-width="1.2"/><polygon points="708.4,470 712.4,470.4 709.4,474" fill="#c8c8c8"/><rect x="708.4" y="476.2" width="10.8" height="1.3" fill="#c8c8c8"/><rect x="727" y="472.1" width="9.4" height="1.8" fill="#c8c8c8"/><circle cx="742.8" cy="473" r="3.3" fill="none" stroke="#c8c8c8" stroke-width="1.2"/><rect x="749.2" y="472.4" width="37.6" height="1.2" fill="#484848"/><polygon points="793.8,477 798.2,471.2 800.2,473.8 802.2,470 807.4,477" fill="#c8c8c8"/><path d="M797.6,477L799.8,473.4" stroke="#323232" stroke-width="0.7"/></svg>
<div class="t" style="left:28.5px;top:7.5px;font-size:9.5px;color:#e8e8e8;letter-spacing:-0.28px;transform:scaleX(0.949);transform-origin:0 50%;">Animate</div>
<div class="t" style="left:83.0px;top:6.0px;font-size:9.3px;color:#dcdcdc;letter-spacing:-0.28px;transform:scaleX(0.848);transform-origin:0 50%;">File</div>
<div class="t" style="left:105.0px;top:6.0px;font-size:9.3px;color:#dcdcdc;letter-spacing:-0.28px;transform:scaleX(0.987);transform-origin:0 50%;">Edit</div>
<div class="t" style="left:129.0px;top:6.0px;font-size:9.3px;color:#dcdcdc;letter-spacing:-0.28px;transform:scaleX(0.888);transform-origin:0 50%;">View</div>
<div class="t" style="left:155.0px;top:6.0px;font-size:9.3px;color:#dcdcdc;letter-spacing:-0.28px;transform:scaleX(0.915);transform-origin:0 50%;">Insert</div>
<div class="t" style="left:184.5px;top:6.0px;font-size:9.3px;color:#dcdcdc;letter-spacing:-0.28px;transform:scaleX(0.981);transform-origin:0 50%;">Modify</div>
<div class="t" style="left:219.0px;top:6.0px;font-size:9.3px;color:#dcdcdc;letter-spacing:-0.28px;transform:scaleX(0.925);transform-origin:0 50%;">Text</div>
<div class="t" style="left:243.5px;top:6.0px;font-size:9.3px;color:#dcdcdc;letter-spacing:-0.28px;transform:scaleX(0.899);transform-origin:0 50%;">Commands</div>
<div class="t" style="left:292.5px;top:6.0px;font-size:9.3px;color:#dcdcdc;letter-spacing:-0.28px;transform:scaleX(0.936);transform-origin:0 50%;">Control</div>
<div class="t" style="left:327.5px;top:6.0px;font-size:9.3px;color:#dcdcdc;letter-spacing:-0.28px;transform:scaleX(0.913);transform-origin:0 50%;">Debug</div>
<div class="t" style="left:360.5px;top:6.0px;font-size:9.3px;color:#dcdcdc;letter-spacing:-0.28px;transform:scaleX(0.915);transform-origin:0 50%;">Window</div>
<div class="t" style="left:398.5px;top:6.0px;font-size:9.3px;color:#dcdcdc;letter-spacing:-0.28px;transform:scaleX(0.957);transform-origin:0 50%;">Help</div>
<div class="t" style="left:41.0px;top:26.9px;font-size:7.6px;color:#787878;letter-spacing:-0.10px;font-weight:bold;">Scene 6.fla (Canvas)</div>
<div class="t" style="left:134.6px;top:26.9px;font-size:7.6px;color:#787878;letter-spacing:-0.01px;font-weight:bold;">different drawings of hands.fla</div>
<div class="t" style="left:266.8px;top:26.9px;font-size:7.6px;color:#f0f0f0;letter-spacing:0.05px;font-weight:bold;">eating.fla</div>
<div class="t" style="left:80.4px;top:45.5px;font-size:10px;color:#e0e0e0;letter-spacing:-0.28px;transform:scaleX(0.794);transform-origin:0 50%;">Scene 1</div>
<div class="t" style="left:767.7px;top:45.3px;font-size:9px;color:#e6e6e6;letter-spacing:-0.21px;">41%</div>
<div class="t" style="left:825.2px;top:33.5px;font-size:7.5px;color:#8a8a8a;letter-spacing:-0.28px;transform:scaleX(0.843);transform-origin:0 50%;">Assets</div>
<div class="t" style="left:848.3px;top:33.5px;font-size:7.5px;color:#ffffff;letter-spacing:-0.28px;transform:scaleX(0.896);transform-origin:0 50%;font-weight:bold;">Properties</div>
<div class="t" style="left:890.1px;top:33.5px;font-size:7.5px;color:#8a8a8a;letter-spacing:-0.28px;transform:scaleX(0.934);transform-origin:0 50%;">Color</div>
<div class="t" style="left:913.0px;top:33.5px;font-size:7.5px;color:#8a8a8a;letter-spacing:-0.28px;transform:scaleX(0.912);transform-origin:0 50%;">Align</div>
<div class="t" style="left:934.6px;top:33.5px;font-size:7.5px;color:#8a8a8a;letter-spacing:-0.20px;">Librar</div>
<div class="t" style="left:957.4px;top:33.5px;font-size:7.5px;color:#8a8a8a;letter-spacing:-0.28px;transform:scaleX(0.907);transform-origin:0 50%;">Comp</div>
<div class="t" style="left:979.9px;top:33.5px;font-size:7.5px;color:#8a8a8a;letter-spacing:-0.21px;">Motior</div>
<div class="t" style="left:840.5px;top:58.0px;font-size:9.5px;color:#6e6e6e;letter-spacing:-0.28px;transform:scaleX(0.958);transform-origin:0 50%;">Tool</div>
<div class="t" style="left:884.8px;top:58.0px;font-size:9.5px;color:#6e6e6e;letter-spacing:-0.28px;transform:scaleX(0.901);transform-origin:0 50%;">Object</div>
<div class="t" style="left:933.6px;top:58.0px;font-size:9.5px;color:#6e6e6e;letter-spacing:-0.28px;transform:scaleX(0.881);transform-origin:0 50%;">Frame</div>
<div class="t" style="left:986.8px;top:58.0px;font-size:9.5px;color:#f4f4f4;letter-spacing:-0.28px;transform:scaleX(0.850);transform-origin:0 50%;">Doc</div>
<div class="t" style="left:868.7px;top:90.0px;font-size:9px;color:#a8a8a8;letter-spacing:-0.28px;transform:scaleX(0.970);transform-origin:0 50%;">eating.fla</div>
<div class="t" style="left:868.7px;top:113.5px;font-size:9px;color:#a8a8a8;letter-spacing:-0.28px;transform:scaleX(0.985);transform-origin:0 50%;">Document</div>
<div class="t" style="left:847.5px;top:173.0px;font-size:9px;color:#e0e0e0;letter-spacing:-0.06px;">Publish Settings</div>
<div class="t" style="left:834.2px;top:202.0px;font-size:8.8px;color:#7c7c7c;letter-spacing:-0.28px;transform:scaleX(0.912);transform-origin:0 50%;">Profile</div>
<div class="t" style="left:871.7px;top:202.0px;font-size:9px;color:#e6e6e6;letter-spacing:-0.28px;transform:scaleX(0.987);transform-origin:0 50%;">Default</div>
<div class="t" style="left:896.2px;top:234.5px;font-size:9px;color:#e0e0e0;letter-spacing:-0.28px;transform:scaleX(0.991);transform-origin:0 50%;">More settings</div>
<div class="t" style="left:847.5px;top:270.5px;font-size:9px;color:#e0e0e0;letter-spacing:-0.07px;">Document Settings</div>
<div class="t" style="left:834.3px;top:299.6px;font-size:7.8px;color:#7c7c7c;letter-spacing:0.00px;transform:scaleX(0.883);transform-origin:0 50%;">W</div>
<div class="t" style="left:850.0px;top:299.0px;font-size:9px;color:#e6e6e6;letter-spacing:-0.28px;transform:scaleX(0.974);transform-origin:0 50%;">1650</div>
<div class="t" style="left:834.3px;top:331.5px;font-size:7.8px;color:#7c7c7c;letter-spacing:0.00px;transform:scaleX(0.922);transform-origin:0 50%;">H</div>
<div class="t" style="left:848.1px;top:331.0px;font-size:9px;color:#e6e6e6;letter-spacing:-0.28px;transform:scaleX(0.954);transform-origin:0 50%;">1200</div>
<div class="t" style="left:931.5px;top:301.0px;font-size:9px;color:#e0e0e0;letter-spacing:-0.28px;transform:scaleX(0.967);transform-origin:0 50%;">Match contents</div>
<div class="t" style="left:928.9px;top:332.8px;font-size:9px;color:#e0e0e0;letter-spacing:-0.28px;transform:scaleX(0.936);transform-origin:0 50%;">Scale Content</div>
<div class="t" style="left:928.9px;top:356.8px;font-size:9px;color:#e0e0e0;letter-spacing:-0.28px;transform:scaleX(0.990);transform-origin:0 50%;">Apply to pasteboard</div>
<div class="t" style="left:928.9px;top:380.8px;font-size:9px;color:#e0e0e0;letter-spacing:-0.28px;transform:scaleX(0.882);transform-origin:0 50%;">Scale Spans</div>
<div class="t" style="left:834.0px;top:355.5px;font-size:8.5px;color:#7c7c7c;letter-spacing:-0.28px;transform:scaleX(0.825);transform-origin:0 50%;">Stage</div>
<div class="t" style="left:834.0px;top:379.9px;font-size:8px;color:#7c7c7c;letter-spacing:-0.28px;transform:scaleX(0.793);transform-origin:0 50%;">FPS</div>
<div class="t" style="left:866.9px;top:379.5px;font-size:9px;color:#e6e6e6;letter-spacing:-0.28px;transform:scaleX(0.935);transform-origin:0 50%;">10</div>
<div class="t" style="left:896.0px;top:412.0px;font-size:9px;color:#e0e0e0;letter-spacing:-0.28px;transform:scaleX(0.987);transform-origin:0 50%;">More settings</div>
<div class="t" style="left:847.4px;top:447.5px;font-size:9px;color:#e0e0e0;letter-spacing:-0.28px;">SWF History</div>
<div class="t" style="left:834.4px;top:474.0px;font-size:8.5px;color:#7a7a7a;letter-spacing:-0.28px;transform:scaleX(0.987);transform-origin:0 50%;">52.8 KB</div>
<div class="t" style="left:940.1px;top:474.0px;font-size:8.5px;color:#7a7a7a;letter-spacing:0.04px;">10/12/2020, 19:54</div>
<div class="t" style="left:924.7px;top:501.5px;font-size:9px;color:#757575;letter-spacing:-0.28px;transform:scaleX(0.991);transform-origin:0 50%;">View log</div>
<div class="t" style="left:980.4px;top:501.5px;font-size:9px;color:#e8e8e8;letter-spacing:-0.28px;transform:scaleX(0.907);transform-origin:0 50%;">Clear</div>
<div class="t" style="left:847.4px;top:537.5px;font-size:9px;color:#e0e0e0;letter-spacing:0.01px;">Accessibility</div>
<div class="t" style="left:850.4px;top:564.0px;font-size:9px;color:#e0e0e0;letter-spacing:-0.28px;transform:scaleX(0.973);transform-origin:0 50%;">Make child objects accessible</div>
<div class="t" style="left:39.4px;top:444.5px;font-size:7.5px;color:#ffffff;letter-spacing:-0.28px;transform:scaleX(0.918);transform-origin:0 50%;font-weight:bold;">Timeline</div>
<div class="t" style="left:76.8px;top:444.5px;font-size:7.5px;color:#7a7a7a;letter-spacing:-0.26px;">Output</div>
<div class="t" style="left:219.7px;top:467.6px;font-size:10px;color:#6e6e6e;letter-spacing:-0.16px;">10.00</div>
<div class="t" style="left:246.8px;top:465.6px;font-size:6.2px;color:#6e6e6e;letter-spacing:-0.28px;transform:scaleX(0.827);transform-origin:0 50%;">FPS</div>
<div class="t" style="left:272.9px;top:467.8px;font-size:10px;color:#f2f2f2;letter-spacing:-0.22px;font-weight:bold;">22</div>
<div class="t" style="left:286.9px;top:465.5px;font-size:6.2px;color:#c8c8c8;letter-spacing:0.00px;transform:scaleX(0.820);transform-origin:0 50%;">F</div>
<div class="t" style="left:69.7px;top:517.5px;font-size:7.5px;color:#f0f0f0;letter-spacing:-0.28px;transform:scaleX(0.995);transform-origin:0 50%;">Layer_3</div>
</body>
</html>
